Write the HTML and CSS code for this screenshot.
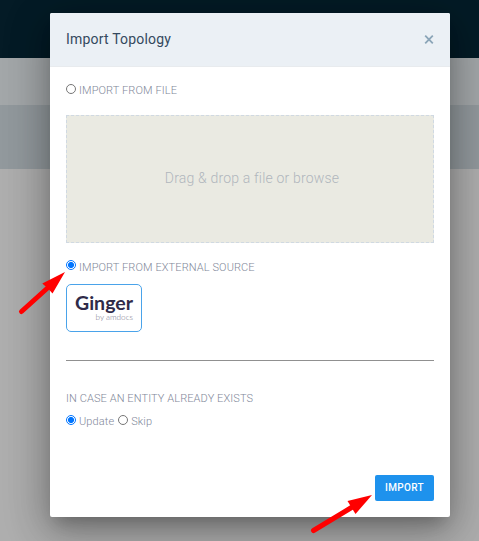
FILE: index.html
```html
<!DOCTYPE html>
<html lang="en">
<head>
<meta charset="utf-8">
<title>Import Topology</title>
<link rel="stylesheet" href="styles.css">
</head>
<body>
<div class="page">
  <div class="topbar"></div>
  <div class="toolbar"></div>
  <div class="subbar"></div>
</div>
<div class="overlay">
  <form class="modal">
    <header class="modal-header">
      <h1>Import Topology</h1>
      <button type="button" class="close" aria-label="Close">
        <svg width="10" height="10" viewBox="0 0 10 10"><path d="M1.200 .7 8.800 8.300M8.800 .7 1.200 8.300"/></svg>
      </button>
    </header>
    <div class="modal-body">
      <label class="option option-file"><input type="radio" name="source"><span>IMPORT FROM FILE</span></label>
      <div class="dropzone"><span>Drag &amp; drop a file or browse</span></div>
      <label class="option option-external"><input type="radio" name="source" checked><span>IMPORT FROM EXTERNAL SOURCE</span></label>
      <div class="source-card">
        <svg width="74" height="46" viewBox="0 0 74 46">
          <text class="logo-name" x="8" y="25" textLength="58" lengthAdjust="spacingAndGlyphs">Ginger</text>
          <text class="logo-by" x="28.5" y="34.5" textLength="37.5" lengthAdjust="spacingAndGlyphs">by amdocs</text>
        </svg>
      </div>
      <hr>
      <div class="exists-title"><span>IN CASE AN ENTITY ALREADY EXISTS</span></div>
      <div class="exists-options">
        <label class="option"><input type="radio" name="exists" checked><span>Update</span></label>
        <label class="option"><input type="radio" name="exists"><span>Skip</span></label>
      </div>
    </div>
    <footer class="modal-footer"><button type="button" class="import">IMPORT</button></footer>
  </form>
</div>
<svg class="arrows" width="479" height="541" viewBox="0 0 479 541">
  <path class="shaft" d="M21.5 311.5 47 288.5"/>
  <path class="head" d="M65 272 52.5 293.5 48.5 289 42.3 283.4Z"/>
  <path class="shaft" d="M313.5 530.5 351.5 507.5"/>
  <path class="head" d="M372 495 355.5 514 351.5 507.5 347.5 501Z"/>
</svg>
</body>
</html>
```

FILE: styles.css
```css
* { box-sizing: border-box; }
body {
  margin: 0;
  height: 541px;
  overflow: hidden;
  background: #aeaeae;
  font-family: Roboto, "Liberation Sans", sans-serif;
}
.page { height: 541px; }
.topbar { height: 58px; background: #041b26; }
.toolbar { height: 47px; background: #a3a7a9; }
.subbar { height: 64px; background: #92999d; }
.overlay {
  position: absolute;
  inset: 0;
  padding: 13px 29px 24px 50px;
}
.modal {
  display: flex;
  flex-direction: column;
  width: 400px;
  height: 504px;
  background: #fff;
  border-radius: 2px;
  box-shadow: 0 11px 15px -7px rgba(0, 0, 0, .2), 0 9px 46px 8px rgba(0, 0, 0, .12), 0 12px 38px 3px rgba(0, 0, 0, .24);
}
.modal-header {
  display: flex;
  justify-content: space-between;
  align-items: center;
  height: 54px;
  padding: 0 16px;
  background: #ebf0f5;
  border-bottom: 1px solid #e8ebee;
  border-radius: 2px 2px 0 0;
}
h1 {
  margin: 0 0 1px;
  color: #34495e;
  font-size: 14px;
  font-weight: 400;
  line-height: 20px;
  letter-spacing: .2px;
}
.close {
  display: flex;
  padding: 0;
  border: 0;
  background: none;
}
.close path { stroke: #8ba5b8; stroke-width: 1.8; }
.modal-body { flex: 1; padding: 0 16px; }
.option {
  display: flex;
  align-items: center;
  height: 14px;
  color: #818899;
  font-size: 11px;
  font-weight: 300;
  line-height: 14px;
  letter-spacing: .11px;
  white-space: nowrap;
}
.option input {
  appearance: none;
  flex: none;
  width: 10px;
  height: 10px;
  margin: 0 3px 2px 0;
  border: 1px solid #767676;
  border-radius: 50%;
  background: #fff;
}
.option input:checked {
  border-color: #0075ff;
  background: radial-gradient(circle, #0075ff 2.7px, #fff 3.4px);
}
.option-file span { padding-top: 2px; }
.option-external span { padding-top: 4px; }
.option-file { margin-top: 16px; }
.dropzone {
  display: flex;
  align-items: center;
  justify-content: center;
  height: 128px;
  margin-top: 18px;
  padding: 0 0 3px 4px;
  border: 1px dashed #d0d9e2;
  background: #eaeae2;
  color: #b0b6bd;
  font-size: 14px;
  font-weight: 300;
  line-height: 20px;
  letter-spacing: .18px;
}
.option-external { margin-top: 16px; }
.source-card {
  width: 76px;
  height: 48px;
  margin-top: 11px;
  border: 1px solid #4aa3ea;
  border-radius: 5px;
}
.source-card svg { display: block; }
.logo-name {
  fill: #302b49;
  font: 700 18px Lato, sans-serif;
}
.logo-by {
  fill: #77758a;
  font: 300 7px Lato, sans-serif;
}
hr {
  height: 1px;
  margin: 28px 0 0;
  border: 0;
  background: #909090;
}
.exists-title {
  height: 14px;
  margin-top: 31px;
  color: #818899;
  font-size: 11px;
  font-weight: 300;
  line-height: 14px;
  letter-spacing: .1px;
}
.exists-options { display: flex; gap: 4px; margin-top: 8px; }
.exists-options .option span { padding-top: 1px; }
.modal-footer {
  display: flex;
  justify-content: flex-end;
  padding: 0 16px 16px;
}
.import {
  width: 59px;
  height: 26px;
  padding: 0;
  border: 0;
  border-radius: 2px;
  background: #1e92ed;
  color: #fff;
  font: 500 10px/26px Roboto, sans-serif;
  letter-spacing: .35px;
}
.arrows { position: absolute; top: 0; left: 0; pointer-events: none; }
.shaft { fill: none; stroke: #f00; stroke-width: 5; stroke-linecap: round; }
.head { fill: #f00; }
```
